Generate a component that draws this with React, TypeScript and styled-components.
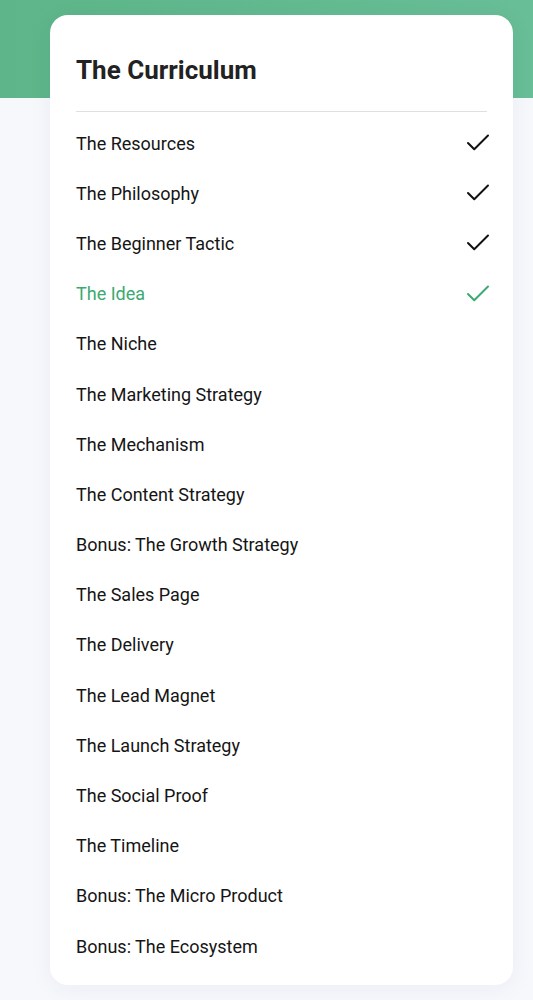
import React from 'react'
import styled, { createGlobalStyle } from 'styled-components'
import { Check } from 'lucide-react'

const GlobalStyle = createGlobalStyle`
  body {
    margin: 0;
    background: #f7f8fc;
    font-family: Roboto, "Noto Sans", Arial, sans-serif;
  }
`

const Page = styled.div`
  position: relative;
  min-height: 1000px;
  padding: 15px 20px 16px 50px;
  box-sizing: border-box;
`

// green band behind the top of the card
const Band = styled.div`
  position: absolute;
  top: 0;
  left: 0;
  right: 0;
  height: 98px;
  background: linear-gradient(90deg, #5db589 0%, #68be97 100%);
`

const Card = styled.section`
  position: relative;
  background: #fff;
  border-radius: 18px;
  padding: 38px 26px 14px;
  box-shadow: 0 4px 24px rgba(30, 40, 80, 0.05);
`

const Title = styled.h2`
  margin: 0;
  font-size: 26px;
  line-height: 34px;
  font-weight: 700;
  color: #222;
`

const Divider = styled.hr`
  border: 0;
  height: 1px;
  background: #e0e0e0;
  margin: 24px 0 6px;
`

const List = styled.ul`
  list-style: none;
  margin: 0;
  padding: 0;
`

const Row = styled.li<{ $active?: boolean }>`
  height: 50.2px;
  display: flex;
  align-items: center;
  justify-content: space-between;
  font-size: 18px;
  color: ${(p) => (p.$active ? '#3aaa72' : '#151515')};
`

const Tick = styled(Check)<{ $active?: boolean }>`
  color: ${(p) => (p.$active ? '#3aaa72' : '#111')};
  margin-right: -6px;
`

const lessons = [
  { title: 'The Resources', done: true },
  { title: 'The Philosophy', done: true },
  { title: 'The Beginner Tactic', done: true },
  { title: 'The Idea', done: true, active: true },
  { title: 'The Niche' },
  { title: 'The Marketing Strategy' },
  { title: 'The Mechanism' },
  { title: 'The Content Strategy' },
  { title: 'Bonus: The Growth Strategy' },
  { title: 'The Sales Page' },
  { title: 'The Delivery' },
  { title: 'The Lead Magnet' },
  { title: 'The Launch Strategy' },
  { title: 'The Social Proof' },
  { title: 'The Timeline' },
  { title: 'Bonus: The Micro Product' },
  { title: 'Bonus: The Ecosystem' },
]

export default function App() {
  return (
    <>
      <GlobalStyle />
      <Page>
        <Band />
        <Card>
          <Title>The Curriculum</Title>
          <Divider />
          <List>
            {lessons.map((l) => (
              <Row key={l.title} $active={l.active}>
                <span>{l.title}</span>
                {l.done && <Tick $active={l.active} size={30} strokeWidth={1.6} />}
              </Row>
            ))}
          </List>
        </Card>
      </Page>
    </>
  )
}
